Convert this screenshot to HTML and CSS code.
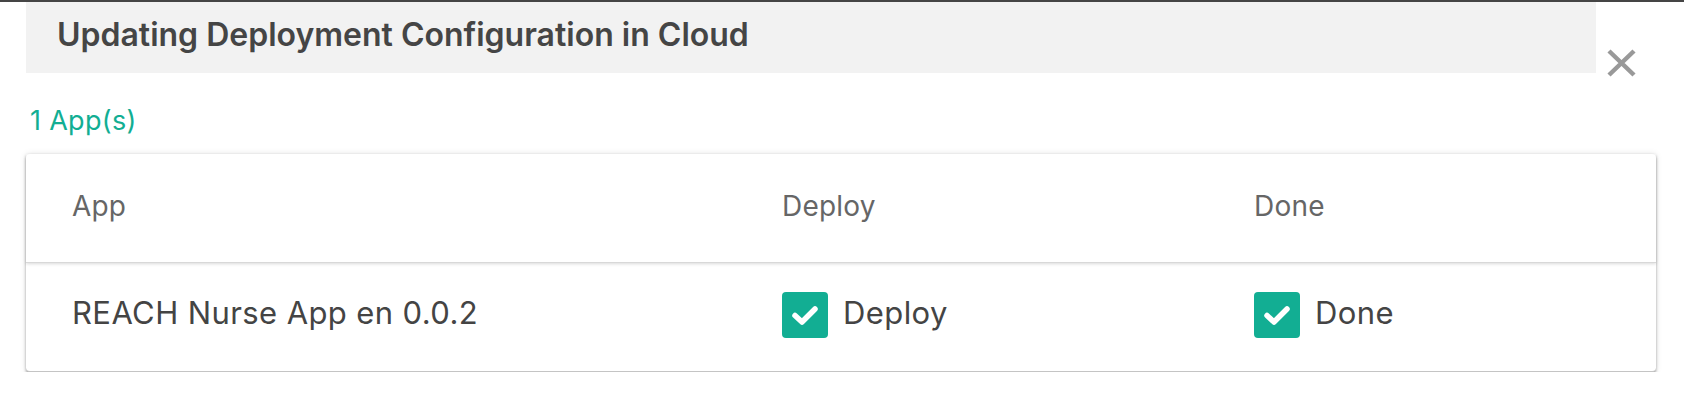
FILE: index.html
```html
<!DOCTYPE html>
<html lang="en">
<head>
    <meta charset="UTF-8">
    <meta name="viewport" content="width=device-width, initial-scale=1.0">
    <title>Updating Deployment Configuration in Cloud</title>
    <link rel="stylesheet" href="styles.css">
</head>
<body>
    <div class="topbar"></div>

    <div class="modal">
        <div class="modal-head">
            <div class="title-box">Updating Deployment Configuration in Cloud</div>
            <button class="close" aria-label="Close">
                <svg viewBox="0 0 29 28" width="29" height="28">
                    <path d="M2 2 L27 26 M27 2 L2 26" stroke="#999" stroke-width="4.5" fill="none"/>
                </svg>
            </button>
        </div>

        <div class="app-count">1 App(s)</div>

        <div class="card">
            <div class="row head-row">
                <div class="cell">App</div>
                <div class="cell">Deploy</div>
                <div class="cell">Done</div>
            </div>
            <div class="row body-row">
                <div class="cell">REACH Nurse App en 0.0.2</div>
                <div class="cell">
                    <span class="check">
                        <svg viewBox="0 0 46 46" width="46" height="46">
                            <path d="M13 23.5 L20 30 L33 17" stroke="#fff" stroke-width="5.5" stroke-linecap="round" stroke-linejoin="round" fill="none"/>
                        </svg>
                    </span>
                    Deploy
                </div>
                <div class="cell">
                    <span class="check">
                        <svg viewBox="0 0 46 46" width="46" height="46">
                            <path d="M13 23.5 L20 30 L33 17" stroke="#fff" stroke-width="5.5" stroke-linecap="round" stroke-linejoin="round" fill="none"/>
                        </svg>
                    </span>
                    Done
                </div>
            </div>
        </div>
    </div>
</body>
</html>
```

FILE: styles.css
```css
* {
    margin: 0;
    padding: 0;
    box-sizing: border-box;
}

body {
    font-family: Inter, "Open Sans", sans-serif;
    background: #fff;
    color: #444;
}

.topbar {
    height: 2px;
    background-color: #454545;
}

.modal {
    padding: 0 28px 0 26px;
}

.modal-head {
    display: flex;
    align-items: flex-start;
    height: 71px;
}

.title-box {
    flex: 1;
    height: 71px;
    background-color: #f2f2f2;
    padding: 0 31px 5px;
    font-size: 32px;
    font-weight: 600;
    line-height: 66px;
    color: #454545;
}

.close {
    width: 29px;
    height: 28px;
    margin: 47px 20px 0 11px;
    border: none;
    background: none;
    cursor: pointer;
    display: flex;
}

.app-count {
    margin-top: 30px;
    margin-left: 4px;
    font-size: 27px;
    line-height: 36px;
    letter-spacing: 0.3px;
    color: #12ae93;
}

.card {
    margin-top: 15px;
    background: #fff;
    border-radius: 4px;
    border-bottom: 1px solid #c4c4c4;
    box-shadow: 0 2px 3px rgba(0, 0, 0, 0.35), 0 0 7px rgba(0, 0, 0, 0.1);
}

.row {
    display: grid;
    grid-template-columns: 708px 472px 1fr;
    align-items: center;
}

.cell {
    padding-left: 48px;
    display: flex;
    align-items: center;
}

.cell:first-child {
    padding-left: 46px;
}

.head-row {
    height: 109px;
    padding-bottom: 5px;
    border-bottom: 1px solid #d8d8d8;
    box-shadow: 0 1px 3px rgba(0, 0, 0, 0.15);
    font-size: 28px;
    line-height: 28px;
    letter-spacing: 0.2px;
    color: #666;
}

.body-row {
    height: 108px;
    padding-bottom: 10px;
    font-size: 31px;
    line-height: 31px;
    letter-spacing: 0.4px;
    color: #444;
}

.check {
    width: 46px;
    height: 46px;
    margin-top: 5px;
    margin-right: 15px;
    border-radius: 4px;
    background-color: #12ae93;
    display: flex;
    flex-shrink: 0;
}
```
